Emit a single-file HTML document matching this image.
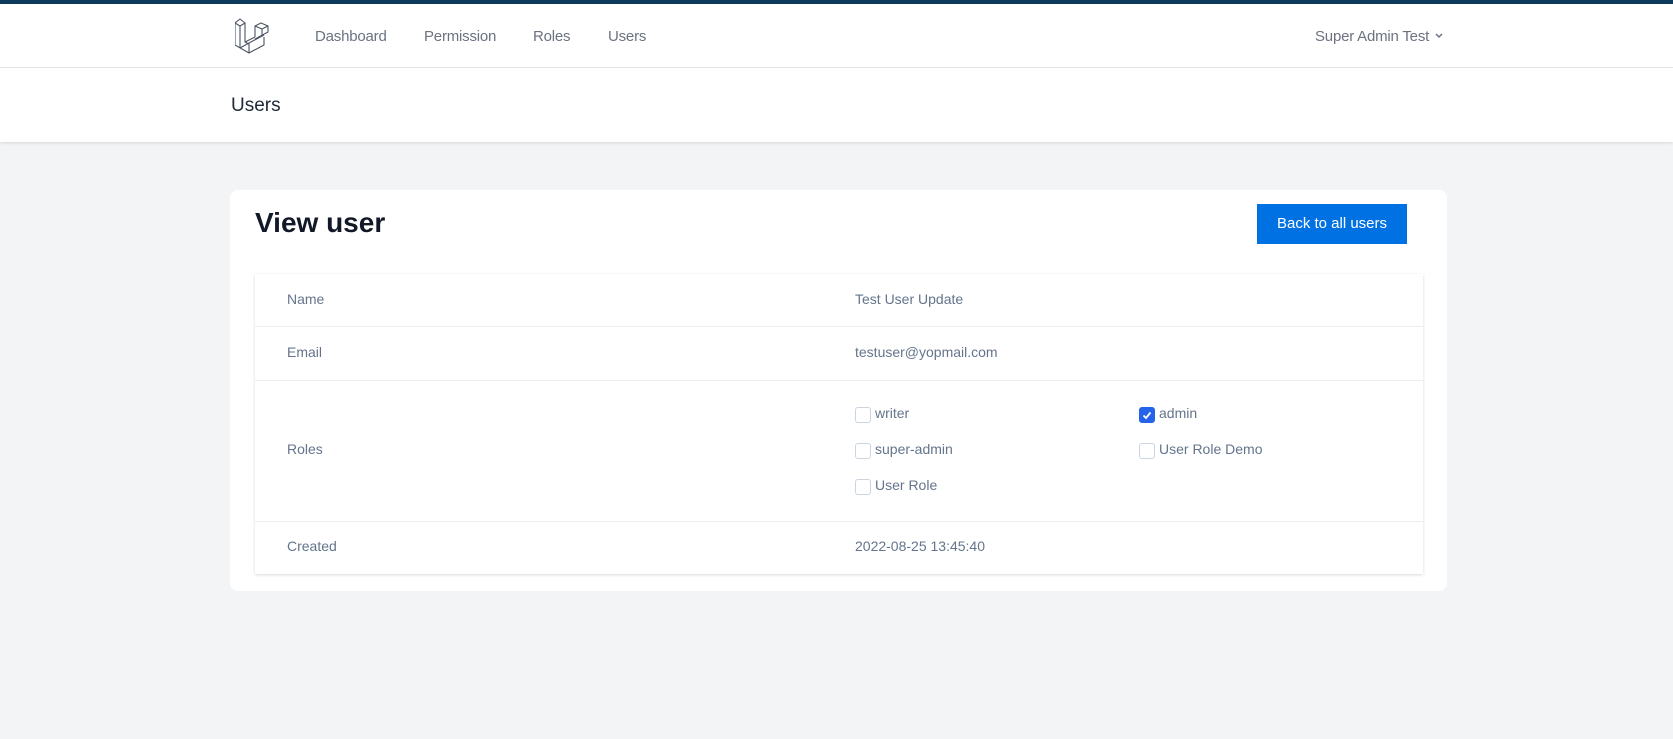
<!DOCTYPE html>
<html><head><meta charset="utf-8"><style>
*{box-sizing:border-box;margin:0;padding:0}
body{width:1673px;height:739px;background:#f3f4f6;font-family:"Liberation Sans",sans-serif;position:relative;overflow:hidden;color:#374151}
.a{position:absolute;white-space:nowrap}
.nav{position:absolute;left:0;top:0;width:1673px;height:68px;background:#fff;border-top:4px solid #0b3a5a;border-bottom:1px solid #e5e7eb}
.hdr{position:absolute;left:0;top:68px;width:1673px;height:74px;background:#fff;box-shadow:0 1px 3px rgba(0,0,0,.12)}
.navl{font-size:15px;color:#6b7280;top:28px;letter-spacing:-0.2px}
.card{position:absolute;left:230px;top:190px;width:1217px;height:401px;background:#fff;border-radius:8px}
.tbl{position:absolute;left:255px;top:274px;width:1168px;height:300px;background:#fff;box-shadow:0 1px 3px rgba(0,0,0,.15)}
.line{position:absolute;left:255px;width:1168px;height:1px;background:#eceef1}
.lbl,.val{font-size:14px;color:#64748b}
.cb{position:absolute;width:16px;height:16px;border:1px solid #cbd5e1;border-radius:3px;background:#fff}
.cb.on{background:#2563eb;border-color:#2563eb}
</style></head><body>
<div class="nav"></div>
<svg class="a" style="left:235px;top:18px" width="36" height="39" viewBox="0 0 36 39" fill="none" stroke="#4b5563" stroke-width="1.1" stroke-linejoin="round">
<path d="M0 5 L5 1 L10 5 L5 8 Z"/>
<path d="M0 5 L0 27 L14 35 L29 27 L29 19"/>
<path d="M5 8 L5 30 M10 5 L10 24 L20 19"/>
<path d="M5 30 L14 25 L14 35 M14 25 L29 17 M10 24 L14 26"/>
<path d="M20 8 L26 5 L33 8 L27 11 Z M20 8 L20 19 M27 11 L27 18 M33 8 L33 14 L20 21"/>
</svg>
<div class="a navl" style="left:315px">Dashboard</div>
<div class="a navl" style="left:424px">Permission</div>
<div class="a navl" style="left:533px">Roles</div>
<div class="a navl" style="left:608px">Users</div>
<div class="a navl" style="left:1315px">Super Admin Test</div>
<svg class="a" style="left:1434px;top:32px" width="10" height="8" viewBox="0 0 10 8"><path d="M2 2 L5 5 L8 2" stroke="#6b7280" stroke-width="1.5" fill="none"/></svg>
<div class="hdr"></div>
<div class="a" style="left:231px;top:95px;font-size:19px;color:#1f2937">Users</div>
<div class="card"></div>
<div class="a" style="left:255px;top:207px;font-size:28px;font-weight:bold;color:#111827">View user</div>
<div class="a" style="left:1257px;top:204px;width:150px;height:40px;background:#0071e3;color:#fff;font-size:15px;line-height:40px;text-align:center">Back to all users</div>
<div class="tbl"></div>
<div class="line" style="top:326px"></div>
<div class="line" style="top:380px"></div>
<div class="line" style="top:521px"></div>
<div class="a lbl" style="left:287px;top:291px">Name</div>
<div class="a val" style="left:855px;top:291px">Test User Update</div>
<div class="a lbl" style="left:287px;top:344px">Email</div>
<div class="a val" style="left:855px;top:344px">testuser@yopmail.com</div>
<div class="a lbl" style="left:287px;top:441px">Roles</div>
<div class="cb" style="left:855px;top:407px"></div><div class="a val" style="left:875px;top:405px">writer</div>
<div class="cb on" style="left:1139px;top:407px"><svg width="14" height="14" viewBox="0 0 14 14" style="position:absolute;left:0;top:0"><path d="M3.5 7.5 L6 10 L10.5 4.5" stroke="#fff" stroke-width="1.8" fill="none"/></svg></div><div class="a val" style="left:1159px;top:405px">admin</div>
<div class="cb" style="left:855px;top:443px"></div><div class="a val" style="left:875px;top:441px">super-admin</div>
<div class="cb" style="left:1139px;top:443px"></div><div class="a val" style="left:1159px;top:441px">User Role Demo</div>
<div class="cb" style="left:855px;top:479px"></div><div class="a val" style="left:875px;top:477px">User Role</div>
<div class="a lbl" style="left:287px;top:538px">Created</div>
<div class="a val" style="left:855px;top:538px">2022-08-25 13:45:40</div>
</body></html>
